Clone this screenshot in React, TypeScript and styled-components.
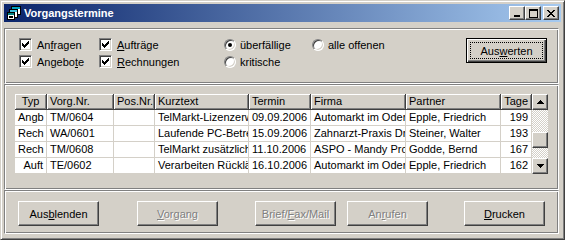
import React from 'react';
import styled, { createGlobalStyle, css } from 'styled-components';

const GlobalStyle = createGlobalStyle`
  html, body {
    margin: 0;
    padding: 0;
    background: #d4d0c8;
  }
  body {
    font-family: "Liberation Sans", Arial, sans-serif;
    font-size: 11px;
    color: #000;
  }
`;

const raised = css`
  background: #d4d0c8;
  border: 1px solid;
  border-color: #fff #404040 #404040 #fff;
  box-shadow: inset -1px -1px 0 #808080;
  box-sizing: border-box;
`;

const Window = styled.div`
  width: 565px;
  height: 240px;
  box-sizing: border-box;
  background: #d4d0c8;
  border: 1px solid;
  border-color: #d4d0c8 #404040 #404040 #d4d0c8;
  box-shadow: inset 1px 1px 0 #fff, inset -1px -1px 0 #808080;
  padding: 3px;
  display: flex;
  flex-direction: column;
`;

const TitleBar = styled.div`
  height: 18px;
  flex: none;
  display: flex;
  align-items: center;
  padding: 0 2px 0 2px;
  background: linear-gradient(to right, #0a246a, #a6caf0);
`;

const TitleText = styled.span`
  margin-left: 2px;
  color: #fff;
  font-weight: bold;
  font-size: 11px;
`;

const TitleButtons = styled.div`
  margin-left: auto;
  display: flex;
`;

const TitleButton = styled.div<{ $gap?: number }>`
  ${raised};
  width: 16px;
  height: 14px;
  margin-left: ${({ $gap }) => $gap ?? 0}px;
  display: flex;
  align-items: center;
  justify-content: center;
`;

const Body = styled.div`
  flex: 1;
  display: flex;
  flex-direction: column;
  padding: 6px 2px 2px 0;
`;

const Panel = styled.div<{ $h: number }>`
  height: ${({ $h }) => $h}px;
  box-sizing: border-box;
  flex: none;
  border-top: 1px solid #808080;
  border-left: 1px solid #808080;
  border-bottom: 1px solid #fff;
  border-right: 1px solid #fff;
  box-shadow: inset 1px 1px 0 #fff, inset -1px -1px 0 #808080;
`;

const FilterPanel = styled(Panel)`
  display: flex;
  align-items: flex-start;
  padding: 7px 11px 0 14px;
`;

const Options = styled.div`
  display: grid;
  grid-template-columns: 80px 125px 88px auto;
  grid-template-rows: 17px 17px;
`;

const Option = styled.label`
  display: flex;
  align-items: center;
  gap: 5px;
  white-space: nowrap;
`;

const RadioOption = styled(Option)`
  gap: 4px;
`;

const CheckBox = styled.span`
  width: 13px;
  height: 13px;
  box-sizing: border-box;
  background: #fff;
  border: 1px solid;
  border-color: #808080 #fff #fff #808080;
  box-shadow: inset 1px 1px 0 #404040, inset -1px -1px 0 #d4d0c8;
  display: flex;
  align-items: center;
  justify-content: center;
`;

const Radio = styled.span<{ $on?: boolean }>`
  width: 12px;
  height: 12px;
  box-sizing: border-box;
  border-radius: 50%;
  background: #fff;
  border: 1px solid;
  border-color: #808080 #fff #fff #808080;
  box-shadow: inset 1px 1px 0 #404040, inset -1px -1px 0 #d4d0c8;
  display: flex;
  align-items: center;
  justify-content: center;
  &::after {
    content: '';
    display: ${({ $on }) => ($on ? 'block' : 'none')};
    width: 4px;
    height: 4px;
    border-radius: 50%;
    background: #000;
  }
`;

const Key = styled.span`
  text-decoration: underline;
`;

const Button = styled.div<{ $disabled?: boolean; $default?: boolean; $ml?: number }>`
  ${raised};
  position: relative;
  width: 81px;
  height: 25px;
  flex: none;
  margin-left: ${({ $ml }) => $ml ?? 0}px;
  display: flex;
  align-items: center;
  justify-content: center;
  white-space: nowrap;
  color: ${({ $disabled }) => ($disabled ? '#808080' : '#000')};
  text-shadow: ${({ $disabled }) => ($disabled ? '1px 1px 0 #fff' : 'none')};
  ${({ $default }) =>
    $default &&
    css`
      border: 1px solid #000;
      box-shadow: inset 1px 1px 0 #fff, inset -1px -1px 0 #404040, inset -2px -2px 0 #808080;
      &::after {
        content: '';
        position: absolute;
        inset: 3px;
        border: 1px dotted #000;
      }
    `}
`;

const SearchButton = styled(Button)`
  margin-left: auto;
  margin-top: 2px;
`;

const ListPanel = styled(Panel)`
  padding: 9px 0 0 10px;
`;

const TableWrap = styled.div`
  display: flex;
  align-items: stretch;
  width: 533px;
`;

const Grid = styled.div<{ $cols: string }>`
  display: grid;
  grid-template-columns: ${({ $cols }) => $cols};
  grid-auto-rows: 16px;
  background: #fff;
`;

const HeadCell = styled.div<{ $align: string }>`
  box-sizing: border-box;
  background: #d4d0c8;
  border-right: 1px solid #404040;
  border-bottom: 1px solid #404040;
  box-shadow: inset 1px 1px 0 #fff, inset -1px -1px 0 #808080;
  padding: 0 3px;
  text-align: ${({ $align }) => $align};
  line-height: 15px;
  white-space: nowrap;
  overflow: hidden;
`;

const Cell = styled.div<{ $align: string }>`
  box-sizing: border-box;
  border-right: 1px solid #d4d0c8;
  border-bottom: 1px solid #d4d0c8;
  padding: 0 3px;
  text-align: ${({ $align }) => $align};
  line-height: 15px;
  white-space: nowrap;
  overflow: hidden;
`;

const ScrollBar = styled.div`
  width: 16px;
  display: flex;
  flex-direction: column;
`;

const ScrollButton = styled.div`
  ${raised};
  height: 16px;
  flex: none;
  display: flex;
  align-items: center;
  justify-content: center;
`;

const Track = styled.div<{ $h?: number }>`
  flex: ${({ $h }) => ($h ? `0 0 ${$h}px` : '1')};
  background: repeating-conic-gradient(#d4d0c8 0% 25%, #fff 0% 50%) 0 0 / 2px 2px;
`;

const Thumb = styled.div`
  ${raised};
  height: 16px;
  flex: none;
`;

const ActionPanel = styled(Panel)`
  display: flex;
  padding: 10px 0 0 13px;
`;

const CheckMark = () => (
  <svg width="9" height="9" viewBox="0 0 9 9" shapeRendering="crispEdges">
    <path d="M1 3h1v1h1v1h1V4h1V3h1V2h1V1h1v3H7v1H6v1H5v1H4v1H3V7H2V6H1z" fill="#000" />
  </svg>
);

const Arrow = ({ up }: { up?: boolean }) => (
  <svg width="7" height="4" viewBox="0 0 7 4" shapeRendering="crispEdges">
    <path d={up ? 'M3 0h1v1h1v1h1v1h1v1H0V3h1V2h1V1h1z' : 'M0 0h7v1H6v1H5v1H4v1H3V3H2V2H1V1H0z'} fill="#000" />
  </svg>
);

const AppIcon = () => (
  <svg width="16" height="16" viewBox="0 0 16 16" shapeRendering="crispEdges">
    <rect x="5.5" y="1.5" width="9" height="8" fill="#fff" stroke="#000" />
    <rect x="6" y="2" width="8" height="2" fill="#00a0c0" />
    <rect x="3.5" y="4.5" width="8" height="8" fill="#fff" stroke="#000" />
    <rect x="4" y="5" width="7" height="2" fill="#40c0e0" />
    <rect x="1.5" y="7.5" width="7" height="7" fill="#fff" stroke="#000" />
    <rect x="2" y="8" width="6" height="2" fill="#008080" />
    <rect x="3" y="11" width="4" height="2" fill="#000" />
  </svg>
);

const columns = [
  { title: 'Typ', width: 32, align: 'right', head: 'center' },
  { title: 'Vorg.Nr.', width: 67, align: 'left', head: 'left' },
  { title: 'Pos.Nr.', width: 41, align: 'left', head: 'left' },
  { title: 'Kurztext', width: 94, align: 'left', head: 'left' },
  { title: 'Termin', width: 62, align: 'left', head: 'left' },
  { title: 'Firma', width: 95, align: 'left', head: 'left' },
  { title: 'Partner', width: 95, align: 'left', head: 'left' },
  { title: 'Tage', width: 31, align: 'right', head: 'right' },
];

const rows = [
  ['Angb', 'TM/0604', '', 'TelMarkt-Lizenzerweiterung', '09.09.2006', 'Automarkt im Oderland', 'Epple, Friedrich', '199'],
  ['Rech', 'WA/0601', '', 'Laufende PC-Betreuung', '15.09.2006', 'Zahnarzt-Praxis Dr. Weber', 'Steiner, Walter', '193'],
  ['Rech', 'TM/0608', '', 'TelMarkt zusätzliche Lizenz', '11.10.2006', 'ASPO - Mandy Produkt', 'Godde, Bernd', '167'],
  ['Auft', 'TE/0602', '', 'Verarbeiten Rückläufer', '16.10.2006', 'Automarkt im Oderland', 'Epple, Friedrich', '162'],
];

export default function App() {
  const cols = columns.map((c) => `${c.width}px`).join(' ');
  return (
    <>
      <GlobalStyle />
      <Window>
        <TitleBar>
          <AppIcon />
          <TitleText>Vorgangstermine</TitleText>
          <TitleButtons>
            <TitleButton>
              <svg width="8" height="8" viewBox="0 0 8 8" shapeRendering="crispEdges">
                <rect x="1" y="6" width="6" height="2" fill="#000" />
              </svg>
            </TitleButton>
            <TitleButton>
              <svg width="9" height="9" viewBox="0 0 9 9" shapeRendering="crispEdges">
                <path d="M0 0h9v9H0z M1 2v6h7V2z" fill="#000" fillRule="evenodd" />
              </svg>
            </TitleButton>
            <TitleButton $gap={2}>
              <svg width="8" height="7" viewBox="0 0 8 7" shapeRendering="crispEdges">
                <path d="M0 0h2v1h1v1h2V1h1V0h2v1H7v1H6v1H5v1h1v1h1v1h1v1H6V6H5V5H3v1H2v1H0V6h1V5h1V4h1V3H2V2H1V1H0z" fill="#000" />
              </svg>
            </TitleButton>
          </TitleButtons>
        </TitleBar>
        <Body>
          <FilterPanel $h={56}>
            <Options>
              <Option>
                <CheckBox><CheckMark /></CheckBox>
                <span>An<Key>f</Key>ragen</span>
              </Option>
              <Option>
                <CheckBox><CheckMark /></CheckBox>
                <span><Key>A</Key>ufträge</span>
              </Option>
              <RadioOption>
                <Radio $on />
                <span>überfällige</span>
              </RadioOption>
              <RadioOption>
                <Radio />
                <span>alle offenen</span>
              </RadioOption>
              <Option>
                <CheckBox><CheckMark /></CheckBox>
                <span>Angebo<Key>t</Key>e</span>
              </Option>
              <Option>
                <CheckBox><CheckMark /></CheckBox>
                <span><Key>R</Key>echnungen</span>
              </Option>
              <RadioOption>
                <Radio />
                <span>kritische</span>
              </RadioOption>
            </Options>
            <SearchButton $default>
              Aus<Key>w</Key>erten
            </SearchButton>
          </FilterPanel>
          <ListPanel $h={106}>
            <TableWrap>
              <Grid $cols={cols}>
                {columns.map((c) => (
                  <HeadCell key={c.title} $align={c.head}>
                    {c.title}
                  </HeadCell>
                ))}
                {rows.map((r, i) =>
                  r.map((v, j) => (
                    <Cell key={`${i}-${j}`} $align={columns[j].align}>
                      {v}
                    </Cell>
                  ))
                )}
              </Grid>
              <ScrollBar>
                <ScrollButton><Arrow up /></ScrollButton>
                <Track $h={22} />
                <Thumb />
                <Track />
                <ScrollButton><Arrow /></ScrollButton>
              </ScrollBar>
            </TableWrap>
          </ListPanel>
          <ActionPanel $h={44}>
            <Button>
              Aus<Key>b</Key>lenden
            </Button>
            <Button $disabled $ml={38}>
              <span><Key>V</Key>organg</span>
            </Button>
            <Button $disabled $ml={37}>
              <span>Brief/<Key>F</Key>ax/Mail</span>
            </Button>
            <Button $disabled $ml={11}>
              <span>An<Key>r</Key>ufen</span>
            </Button>
            <Button $ml={36}>
              <Key>D</Key>rucken
            </Button>
          </ActionPanel>
        </Body>
      </Window>
    </>
  );
}
